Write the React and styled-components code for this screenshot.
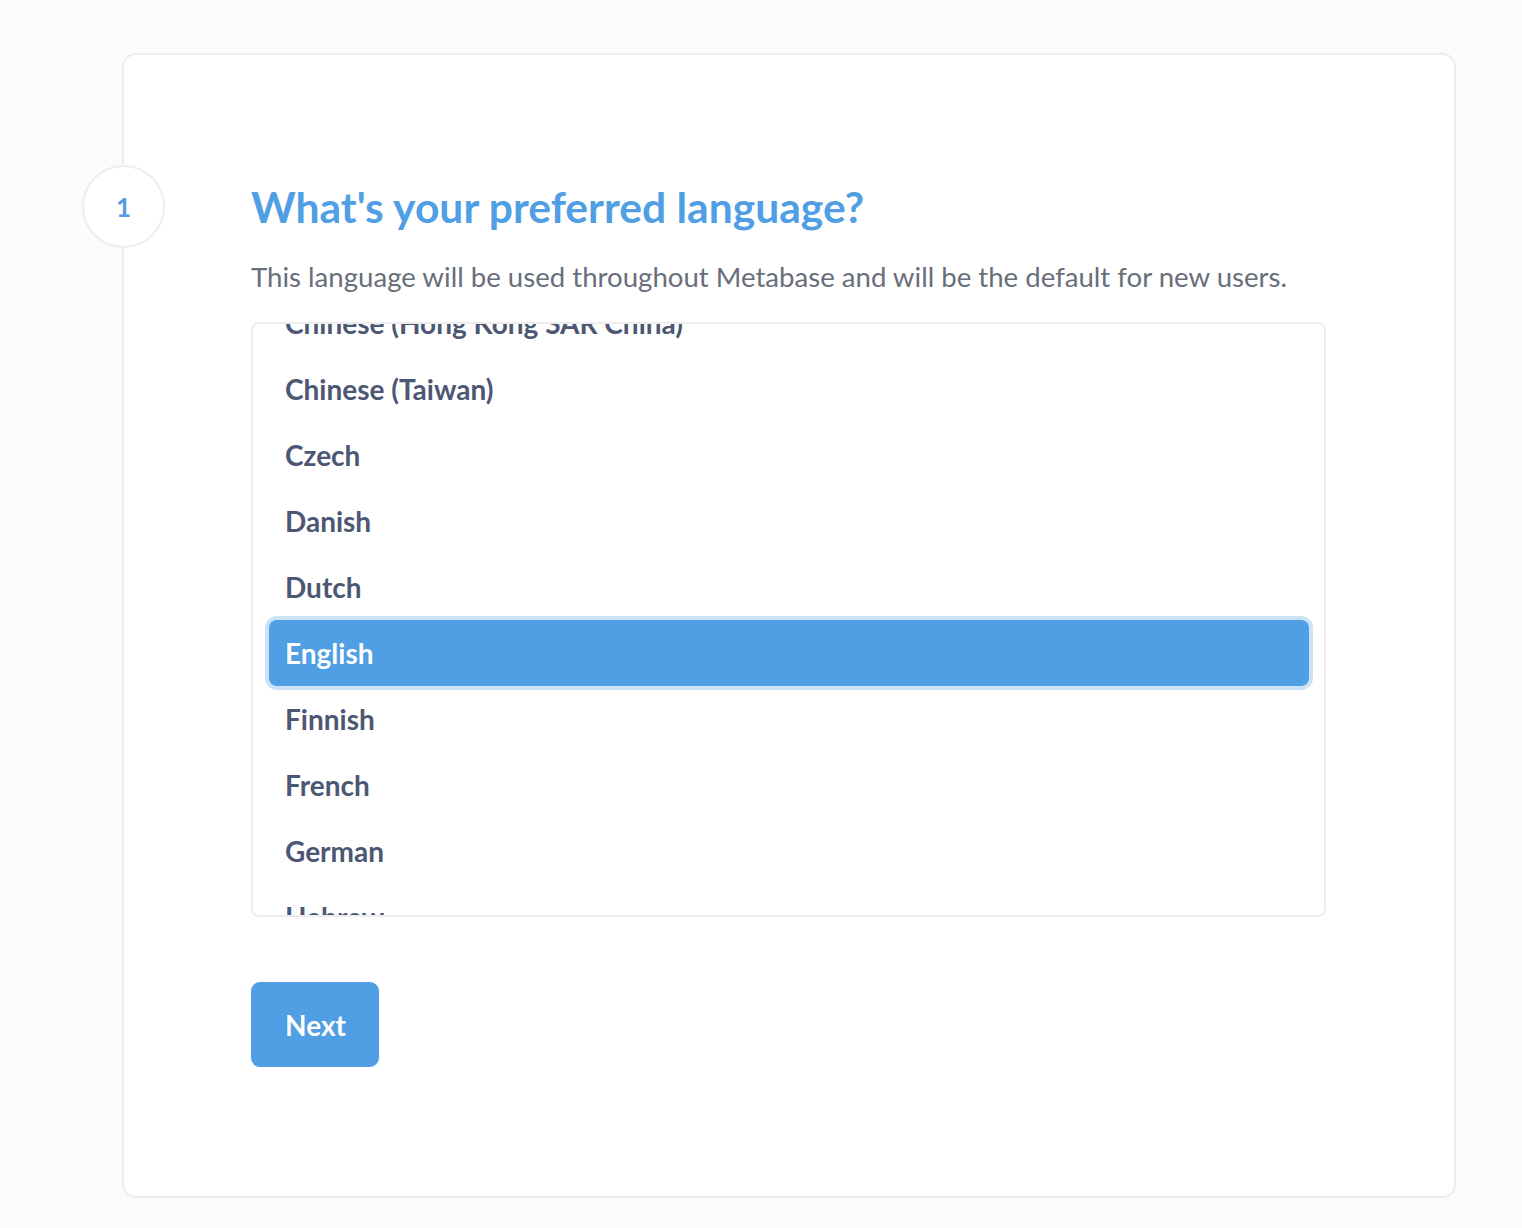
import React, { useLayoutEffect, useRef, useState } from "react";
import styled, { createGlobalStyle } from "styled-components";

const GlobalStyle = createGlobalStyle`
  html, body {
    margin: 0;
    padding: 0;
    background: #f9fbfc;
    font-family: Lato, "Noto Sans", sans-serif;
    -webkit-font-smoothing: antialiased;
  }
  * { box-sizing: border-box; }
`;

const LANGUAGES = [
  "Arabic",
  "Arabic (Saudi Arabia)",
  "Bulgarian",
  "Catalan",
  "Chinese (China)",
  "Chinese (Hong Kong SAR China)",
  "Chinese (Taiwan)",
  "Czech",
  "Danish",
  "Dutch",
  "English",
  "Finnish",
  "French",
  "German",
  "Hebrew",
  "Hungarian",
  "Indonesian",
  "Italian",
  "Japanese",
  "Korean",
  "Latvian",
  "Norwegian Bokmål",
  "Polish",
  "Portuguese (Brazil)",
  "Russian",
  "Serbian",
  "Slovak",
  "Spanish",
  "Swedish",
  "Turkish",
  "Ukrainian",
  "Vietnamese"
];

const ITEM_HEIGHT = 66;

function App() {
  const [selected, setSelected] = useState("English");
  const listRef = useRef(null);

  useLayoutEffect(() => {
    if (listRef.current) listRef.current.scrollTop = 372;
  }, []);

  return (
    <>
      <GlobalStyle />
      <Page>
        <Card>
          <StepNumber>1</StepNumber>
          <Title>What's your preferred language?</Title>
          <Description>
            This language will be used throughout Metabase and will be the default for new users.
          </Description>
          <LocaleList ref={listRef}>
            {LANGUAGES.map((lang) => (
              <LocaleItem
                key={lang}
                $active={lang === selected}
                onClick={() => setSelected(lang)}
              >
                {lang}
              </LocaleItem>
            ))}
          </LocaleList>
          <NextButton>Next</NextButton>
        </Card>
      </Page>
    </>
  );
}

const Page = styled.div`
  min-height: 100vh;
  padding: 53px 66px 31px 122px;
`;

const Card = styled.section`
  position: relative;
  background: #fff;
  border: 2px solid #eeecec;
  border-radius: 14px;
  padding: 127px 128px 129px 127px;
`;

const StepNumber = styled.div`
  position: absolute;
  left: -42px;
  top: 110px;
  width: 83px;
  height: 83px;
  border-radius: 50%;
  border: 2px solid #eeecec;
  background: #fff;
  display: flex;
  align-items: center;
  justify-content: center;
  color: #509ee3;
  font-size: 26px;
  font-weight: 700;
`;

const Title = styled.h2`
  margin: 0;
  color: #509ee3;
  font-size: 42.6px;
  line-height: 50px;
  font-weight: 700;
`;

const Description = styled.p`
  margin: 25px 0 25px;
  color: #696e7b;
  font-size: 27.6px;
  line-height: 40px;
`;

const LocaleList = styled.ul`
  list-style: none;
  margin: 0;
  height: 595px;
  padding: 8px 15px 8px 16px;
  border: 2px solid #eeecec;
  border-radius: 8px;
  overflow-y: auto;
  scrollbar-width: none;
  &::-webkit-scrollbar { display: none; }
`;

const LocaleItem = styled.li`
  height: ${ITEM_HEIGHT}px;
  display: flex;
  align-items: center;
  padding: 0 16px;
  border-radius: 8px;
  font-size: 28px;
  font-weight: 700;
  cursor: pointer;
  color: ${(p) => (p.$active ? "#fff" : "#4c5773")};
  background: ${(p) => (p.$active ? "#509ee3" : "transparent")};
  box-shadow: ${(p) => (p.$active ? "0 0 0 4px #cbe2f7" : "none")};
`;

const NextButton = styled.button`
  display: block;
  margin-top: 65px;
  height: 85px;
  padding: 0 33px 0 34px;
  border: none;
  border-radius: 9px;
  background: #509ee3;
  color: #fff;
  font-family: inherit;
  font-size: 28px;
  font-weight: 700;
  cursor: pointer;
`;

export default App;
